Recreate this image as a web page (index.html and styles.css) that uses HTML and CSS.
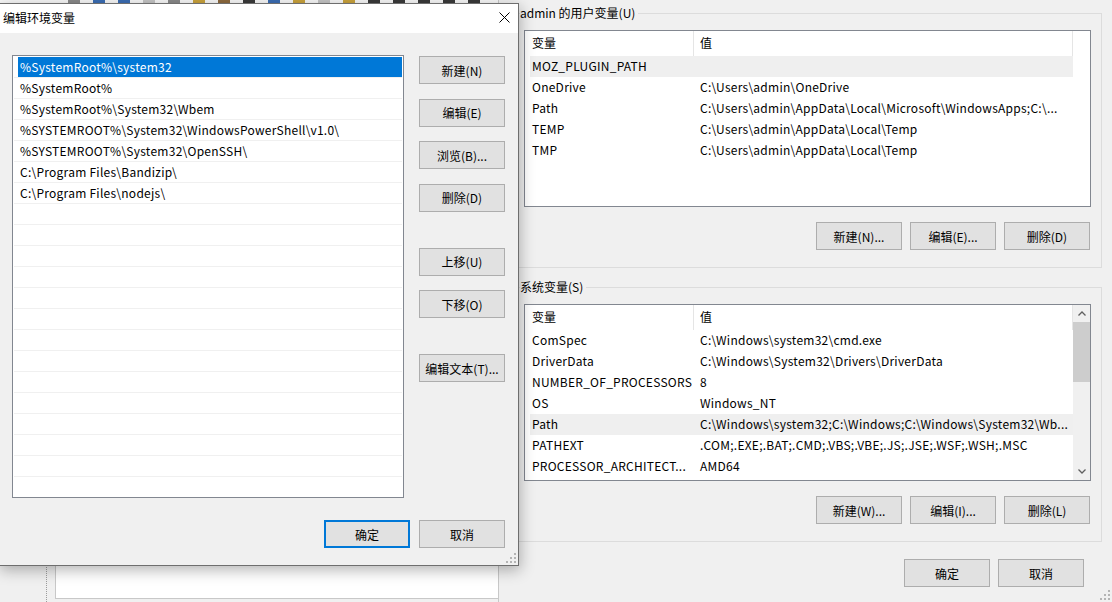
FILE: index.html
```html
<!DOCTYPE html>
<html lang="zh-CN">
<head>
  <meta charset="UTF-8" />
  <meta name="viewport" content="width=device-width, initial-scale=1.0"/>
  <title>编辑环境变量</title>
  <link rel="stylesheet" href="styles.css">
</head>
<body>

  <div class="desktop">

    <!-- window behind the dialogs -->
    <div class="back-app">
      <div class="toolbar">
        <span class="tb c1"></span>
        <span class="tb c2"></span>
        <span class="tb c2"></span>
        <span class="tb c3"></span>
        <span class="tb c1"></span>
        <span class="tb c4"></span>
        <span class="tb c5"></span>
        <span class="tb c6"></span>
        <span class="tb c2"></span>
        <span class="tb c4"></span>
        <span class="tb c3"></span>
        <span class="tb c4"></span>
        <span class="tb c6"></span>
        <span class="tb c6"></span>
        <span class="tb c6"></span>
        <span class="tb c6"></span>
        <span class="tb c6"></span>
      </div>
      <div class="back-body">
        <div class="back-side"></div>
        <div class="back-pane"></div>
      </div>
    </div>

    <!-- 环境变量 -->
    <div class="env-window">
      <fieldset class="group">
        <legend>admin 的用户变量(U)</legend>
        <div class="listview">
          <div class="lv-main">
            <div class="lv-head"><div>变量</div><div>值</div></div>
            <div class="lv-row selected"><div>MOZ_PLUGIN_PATH</div><div></div></div>
            <div class="lv-row"><div>OneDrive</div><div>C:\Users\admin\OneDrive</div></div>
            <div class="lv-row"><div>Path</div><div>C:\Users\admin\AppData\Local\Microsoft\WindowsApps;C:\...</div></div>
            <div class="lv-row"><div>TEMP</div><div>C:\Users\admin\AppData\Local\Temp</div></div>
            <div class="lv-row"><div>TMP</div><div>C:\Users\admin\AppData\Local\Temp</div></div>
          </div>
          <div class="lv-side"></div>
        </div>
        <div class="btn-row">
          <button class="btn">新建(N)...</button>
          <button class="btn">编辑(E)...</button>
          <button class="btn">删除(D)</button>
        </div>
      </fieldset>

      <fieldset class="group next">
        <legend>系统变量(S)</legend>
        <div class="listview">
          <div class="lv-main">
            <div class="lv-head"><div>变量</div><div>值</div></div>
            <div class="lv-row"><div>ComSpec</div><div>C:\Windows\system32\cmd.exe</div></div>
            <div class="lv-row"><div>DriverData</div><div>C:\Windows\System32\Drivers\DriverData</div></div>
            <div class="lv-row"><div>NUMBER_OF_PROCESSORS</div><div>8</div></div>
            <div class="lv-row"><div>OS</div><div>Windows_NT</div></div>
            <div class="lv-row selected"><div>Path</div><div>C:\Windows\system32;C:\Windows;C:\Windows\System32\Wb...</div></div>
            <div class="lv-row"><div>PATHEXT</div><div>.COM;.EXE;.BAT;.CMD;.VBS;.VBE;.JS;.JSE;.WSF;.WSH;.MSC</div></div>
            <div class="lv-row"><div>PROCESSOR_ARCHITECT...</div><div>AMD64</div></div>
          </div>
          <div class="lv-side scrollbar">
            <div class="sb-arrow">
              <svg width="8" height="5" viewBox="0 0 8 5"><path d="M0.5 4.5 L4 1 L7.5 4.5" fill="none" stroke="#606060" stroke-width="1.3"/></svg>
            </div>
            <div class="sb-thumb"></div>
            <div class="sb-track"></div>
            <div class="sb-arrow">
              <svg width="8" height="5" viewBox="0 0 8 5"><path d="M0.5 0.5 L4 4 L7.5 0.5" fill="none" stroke="#606060" stroke-width="1.3"/></svg>
            </div>
          </div>
        </div>
        <div class="btn-row">
          <button class="btn">新建(W)...</button>
          <button class="btn">编辑(I)...</button>
          <button class="btn">删除(L)</button>
        </div>
      </fieldset>

      <div class="btn-row env-foot">
        <button class="btn">确定</button>
        <button class="btn">取消</button>
      </div>

      <svg class="grip" width="10" height="10" viewBox="0 0 10 10">
        <rect x="8" y="0" width="2" height="2"/><rect x="4" y="4" width="2" height="2"/><rect x="8" y="4" width="2" height="2"/>
        <rect x="0" y="8" width="2" height="2"/><rect x="4" y="8" width="2" height="2"/><rect x="8" y="8" width="2" height="2"/>
      </svg>
    </div>

    <!-- 编辑环境变量 -->
    <div class="dialog">
      <div class="titlebar">
        <span class="title">编辑环境变量</span>
        <span class="close">
          <svg width="11" height="11" viewBox="0 0 11 11"><path d="M0.5 0.5 L10.5 10.5 M10.5 0.5 L0.5 10.5" stroke="#000" stroke-width="1"/></svg>
        </span>
      </div>

      <div class="dialog-body">
        <div class="path-list">
          <div class="path-row selected"><span>%SystemRoot%\system32</span></div>
          <div class="path-row"><span>%SystemRoot%</span></div>
          <div class="path-row"><span>%SystemRoot%\System32\Wbem</span></div>
          <div class="path-row"><span>%SYSTEMROOT%\System32\WindowsPowerShell\v1.0\</span></div>
          <div class="path-row"><span>%SYSTEMROOT%\System32\OpenSSH\</span></div>
          <div class="path-row"><span>C:\Program Files\Bandizip\</span></div>
          <div class="path-row"><span>C:\Program Files\nodejs\</span></div>
          <div class="path-row"><span></span></div>
          <div class="path-row"><span></span></div>
          <div class="path-row"><span></span></div>
          <div class="path-row"><span></span></div>
          <div class="path-row"><span></span></div>
          <div class="path-row"><span></span></div>
          <div class="path-row"><span></span></div>
          <div class="path-row"><span></span></div>
          <div class="path-row"><span></span></div>
          <div class="path-row"><span></span></div>
          <div class="path-row"><span></span></div>
          <div class="path-row"><span></span></div>
          <div class="path-row"><span></span></div>
          <div class="path-row"><span></span></div>
        </div>

        <div class="btn-col">
          <button class="btn">新建(N)</button>
          <button class="btn">编辑(E)</button>
          <button class="btn">浏览(B)...</button>
          <button class="btn">删除(D)</button>
          <button class="btn sep">上移(U)</button>
          <button class="btn">下移(O)</button>
          <button class="btn sep">编辑文本(T)...</button>
        </div>
      </div>

      <div class="dialog-foot">
        <button class="btn default">确定</button>
        <button class="btn">取消</button>
      </div>

      <svg class="grip" width="10" height="10" viewBox="0 0 10 10">
        <rect x="8" y="0" width="2" height="2"/><rect x="4" y="4" width="2" height="2"/><rect x="8" y="4" width="2" height="2"/>
        <rect x="0" y="8" width="2" height="2"/><rect x="4" y="8" width="2" height="2"/><rect x="8" y="8" width="2" height="2"/>
      </svg>
    </div>

  </div>

</body>
</html>
```

FILE: styles.css
```css
* {
  box-sizing: border-box;
}

body {
  margin: 0;
  padding: 0;
  font-family: "Noto Sans CJK SC", "Noto Sans", sans-serif;
  font-size: 12px;
  color: #000;
  background: #f0f0f0;
}

.desktop {
  position: relative;
  width: 1112px;
  height: 602px;
  overflow: hidden;
}

/* ---------- window behind ---------- */

.back-app {
  position: absolute;
  left: 0;
  top: 0;
  width: 498px;
  height: 602px;
  display: flex;
  flex-direction: column;
  background: #f0f0f0;
}

.toolbar {
  height: 30px;
  display: flex;
  gap: 13px;
  padding-left: 68px;
  background: #f7f7f7;
}

.tb {
  width: 12px;
  height: 3px;
}

.tb.c1 { background: #8a8a8a; }
.tb.c2 { background: #3b6db3; }
.tb.c3 { background: #c4c4c4; }
.tb.c4 { background: #c9a23c; }
.tb.c5 { background: #8d6a3f; }
.tb.c6 { background: #3a3a3a; }

.back-body {
  flex: 1;
  display: flex;
}

.back-side {
  width: 47px;
  border-right: 1px dotted #9c9c9c;
  margin-right: 8px;
}

.back-pane {
  flex: 1;
  background: #fff;
  border-left: 1px solid #c8c8c8;
  border-bottom: 1px solid #c8c8c8;
  margin-bottom: 3px;
}

/* ---------- 环境变量 window ---------- */

.env-window {
  position: absolute;
  left: 498px;
  top: 0;
  width: 614px;
  height: 602px;
  padding: 5px 0 0 13px;
  border-left: 1px solid #c8c8c8;
  background: #f0f0f0;
}

.group {
  width: 590px;
  margin: 0;
  padding: 9px 10px 17px 11px;
  border: 1px solid #dcdcdc;
  min-width: 0;
}

.group.next {
  margin-top: 11px;
}

.group legend {
  margin-left: -4px;
  padding: 0 3px 0 0;
  line-height: 16px;
}

.listview {
  display: flex;
  height: 177px;
  border: 1px solid #828790;
  background: #fff;
  overflow: hidden;
}

.lv-main {
  flex: 1;
}

.lv-side {
  width: 17px;
}

.lv-head {
  display: grid;
  grid-template-columns: 169px 1fr;
  height: 25px;
  line-height: 24px;
}

.lv-head div {
  border-right: 1px solid #e5e5e5;
  padding-left: 7px;
}

.lv-head div + div {
  padding-left: 6px;
}

.lv-row {
  display: grid;
  grid-template-columns: 168px 1fr;
  height: 21px;
  line-height: 20px;
  margin-left: 5px;
  white-space: nowrap;
  letter-spacing: 0.25px;
}

.lv-row div {
  padding-left: 2px;
  overflow: hidden;
}

.lv-row.selected {
  background: #efefef;
}

.scrollbar {
  display: flex;
  flex-direction: column;
  background: #f0f0f0;
}

.sb-arrow {
  height: 17px;
  display: flex;
  align-items: center;
  justify-content: center;
}

.sb-thumb {
  height: 60px;
  background: #cdcdcd;
}

.sb-track {
  flex: 1;
}

.btn-row {
  display: flex;
  justify-content: flex-end;
  gap: 8px;
  margin-top: 15px;
  margin-right: 1px;
}

.env-foot {
  margin-top: 17px;
  margin-right: 28px;
}

.btn {
  width: 86px;
  height: 28px;
  padding: 0;
  border: 1px solid #adadad;
  background: #e1e1e1;
  font-family: inherit;
  font-size: 12px;
  color: #000;
}

.btn.default {
  border: 2px solid #0078d7;
}

.grip {
  position: absolute;
  right: 2px;
  bottom: 2px;
  fill: #b4b4b4;
}

/* ---------- 编辑环境变量 dialog ---------- */

.dialog {
  position: absolute;
  left: -1px;
  top: 3px;
  width: 520px;
  height: 563px;
  border: 1px solid #6e6e6e;
  background: #f0f0f0;
  box-shadow: 1px 4px 14px rgba(0, 0, 0, 0.3);
}

.titlebar {
  height: 29px;
  display: flex;
  align-items: center;
  justify-content: space-between;
  padding-bottom: 2px;
  background: #fff;
}

.title {
  padding-left: 3px;
}

.close {
  width: 28px;
  display: flex;
  justify-content: center;
}

.dialog-body {
  display: flex;
  align-items: flex-start;
  padding: 22px 13px 0 12px;
}

.path-list {
  width: 392px;
  height: 443px;
  margin-right: 15px;
  padding: 1px 1px 0 1px;
  border: 1px solid #828790;
  background: #fff;
  overflow: hidden;
}

.path-row {
  height: 21px;
  padding-left: 4px;
  border-bottom: 1px solid #f0f0f0;
}

.path-row span {
  display: block;
  height: 20px;
  line-height: 20px;
  padding-left: 2px;
  white-space: nowrap;
  letter-spacing: 0.25px;
}

.path-row.selected span {
  background: #0078d7;
  color: #fff;
}

.btn-col {
  width: 86px;
  margin-top: 1px;
  display: flex;
  flex-direction: column;
  gap: 14.5px;
}

.btn-col .sep {
  margin-top: 21.5px;
}

.dialog-foot {
  display: flex;
  justify-content: flex-end;
  gap: 9px;
  margin-top: 22px;
  padding-right: 13px;
}
```
